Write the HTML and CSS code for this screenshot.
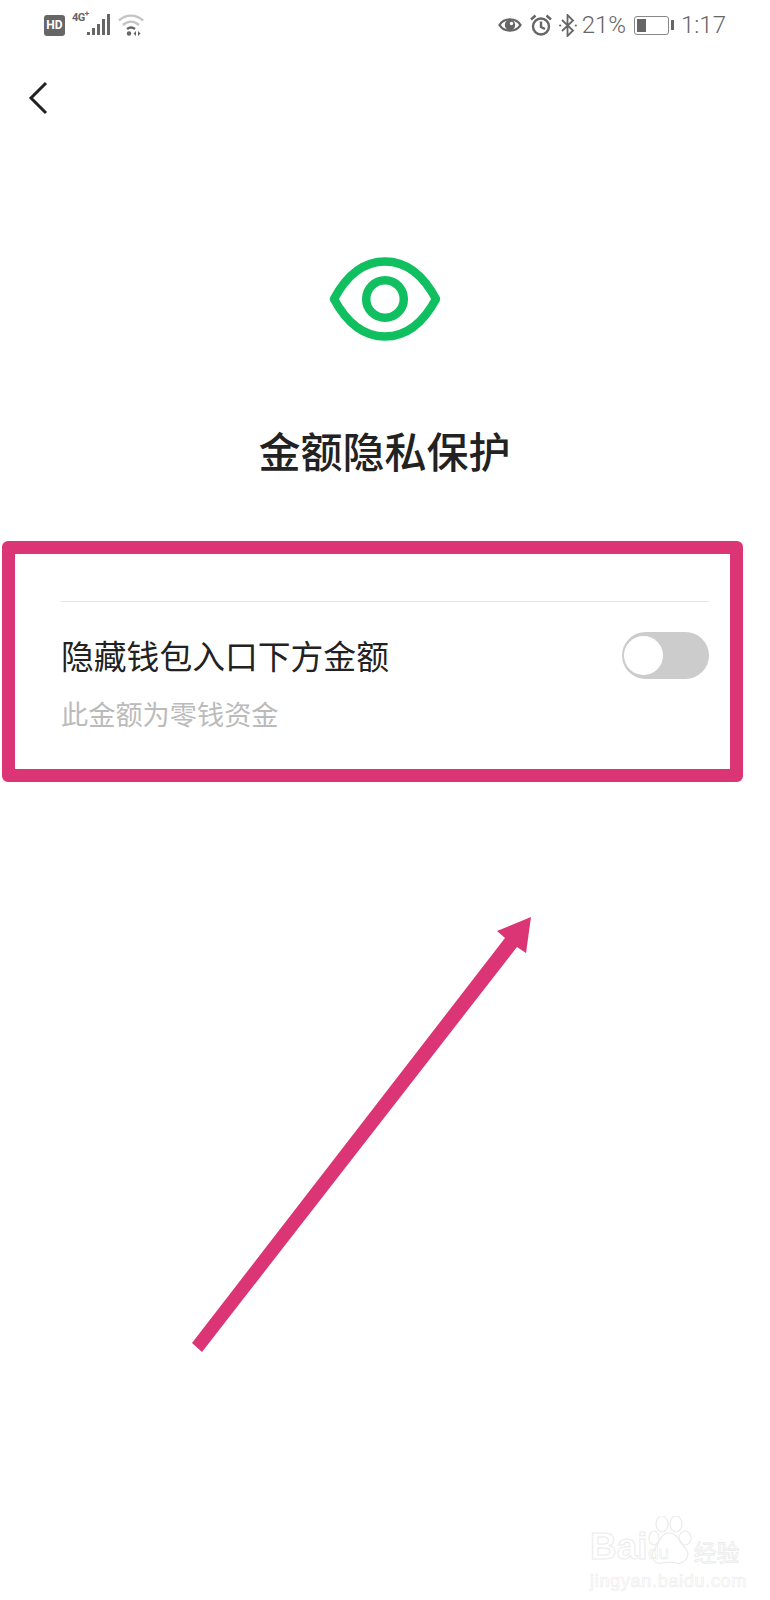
FILE: index.html
```html
<!DOCTYPE html>
<html lang="zh-CN">
<head>
    <meta charset="UTF-8">
    <meta name="viewport" content="width=device-width, initial-scale=1.0">
    <title>金额隐私保护</title>
    <link rel="stylesheet" href="styles.css">
</head>
<body>
    <div class="status-bar">
        <div class="status-left">
            <div class="hd-badge">HD</div>
            <div class="signal">
                <span class="net-type">4G<sup>+</sup></span>
                <svg class="signal-bars" width="24" height="22" viewBox="0 0 24 22" fill="#666">
                    <rect x="0" y="18" width="3" height="3"></rect>
                    <rect x="5" y="14" width="3" height="7"></rect>
                    <rect x="10" y="10" width="3" height="11"></rect>
                    <rect x="15" y="5" width="3" height="16"></rect>
                    <rect x="20" y="0" width="3" height="21"></rect>
                </svg>
            </div>
            <svg class="wifi" width="26" height="24" viewBox="0 0 26 24" fill="none" stroke-width="2.4">
                <path d="M1 7.5C8 1 18 1 25 7.5" stroke="#c4c4c4"></path>
                <path d="M5 12C10 7.5 16 7.5 21 12" stroke="#c4c4c4"></path>
                <path d="M9 16C11.5 14 14.5 14 17 16" stroke="#666"></path>
                <circle cx="11" cy="20.5" r="2.2" fill="#666" stroke="none"></circle>
                <path d="M18 18L15.5 20.5L18 23ZM20 18L22.5 20.5L20 23Z" fill="#666" stroke="none"></path>
            </svg>
        </div>
        <div class="status-right">
            <svg width="24" height="18" viewBox="0 0 24 18" fill="none" stroke="#666" stroke-width="2.4">
                <path d="M1.5 9C6 1.5 18 1.5 22.5 9C18 16.5 6 16.5 1.5 9Z"></path>
                <circle cx="12" cy="9" r="5.2" fill="#666" stroke="none"></circle>
                <circle cx="13.5" cy="7.5" r="1.7" fill="#fff" stroke="none"></circle>
            </svg>
            <svg class="alarm" width="22" height="22" viewBox="0 0 22 22" fill="none" stroke="#666" stroke-width="2.4">
                <circle cx="11" cy="12.5" r="8"></circle>
                <path d="M11 7.5V13L15 15"></path>
                <path d="M1 5.5L5.5 1.5M21 5.5L16.5 1.5"></path>
            </svg>
            <svg class="bluetooth" width="18" height="23" viewBox="0 0 18 23" fill="none" stroke="#666" stroke-width="1.8">
                <path d="M3 6L14 16.5L8.5 22V1L14 6.5L3 17"></path>
                <circle cx="1.2" cy="11.5" r="1.1" fill="#666" stroke="none"></circle>
                <circle cx="16.8" cy="11.5" r="1.1" fill="#666" stroke="none"></circle>
            </svg>
            <span class="battery-text">21%</span>
            <div class="battery">
                <div class="battery-body"><div class="battery-level"></div></div>
                <div class="battery-tip"></div>
            </div>
            <span class="clock">1:17</span>
        </div>
    </div>

    <div class="nav">
        <svg width="20" height="34" viewBox="0 0 20 34" fill="none" stroke="#222" stroke-width="3">
            <path d="M18 2L3 17L18 32"></path>
        </svg>
    </div>

    <div class="hero">
        <svg width="112" height="84" viewBox="0 0 112 84" fill="none" stroke="#10c060" stroke-width="8.5">
            <path d="M5 42C20 14 38 4.5 56 4.5C74 4.5 92 14 107 42C92 70 74 79.5 56 79.5C38 79.5 20 70 5 42Z" stroke-linejoin="round"></path>
            <circle cx="56" cy="42" r="18.8"></circle>
        </svg>
        <h1 class="hero-title">金额隐私保护</h1>
    </div>

    <div class="setting-box">
        <div class="setting-line"></div>
        <div class="setting-row">
            <span class="setting-label">隐藏钱包入口下方金额</span>
            <div class="switch"><div class="switch-knob"></div></div>
        </div>
        <div class="setting-desc">此金额为零钱资金</div>
    </div>

    <!-- 标注箭头 -->
    <svg class="arrow" width="770" height="1600" viewBox="0 0 770 1600">
        <polygon points="192,1343 505,938 497,931 531,917 526,953 517,947 202,1352" fill="#dc3576"></polygon>
    </svg>

    <!-- 水印 -->
    <div class="watermark">
        <div class="wm-logo">
            <span class="wm-word">Bai</span>
            <svg class="wm-paw" width="44" height="52" viewBox="0 0 44 52" fill="none" stroke="#ebebeb" stroke-width="1.2">
                <ellipse cx="14" cy="8" rx="6" ry="8"></ellipse>
                <ellipse cx="28" cy="8" rx="6" ry="8"></ellipse>
                <ellipse cx="6" cy="22" rx="5" ry="7"></ellipse>
                <ellipse cx="37" cy="22" rx="6" ry="7"></ellipse>
                <path d="M21 17C30 17 33 28 38 33C43 40 36 49 28 47C24 46 18 46 14 47C6 49 2 40 6 34C11 29 12 17 21 17Z"></path>
            </svg>
            <span class="wm-du">du</span>
            <span class="wm-cn">经验</span>
        </div>
        <div class="wm-url">jingyan.baidu.com</div>
    </div>
</body>
</html>
```

FILE: styles.css
```css
body {
    position: relative;
    margin: 0;
    height: 1600px;
    overflow: hidden;
    background-color: #ffffff;
    font-family: "Noto Sans CJK SC", "Liberation Sans", sans-serif;
}

/* 状态栏 */
.status-bar {
    height: 50px;
    padding: 0 44px;
    display: flex;
    align-items: center;
    justify-content: space-between;
    color: #666;
    font-family: Roboto, "Liberation Sans", sans-serif;
}

.status-left,
.status-right {
    display: flex;
    align-items: center;
}

.hd-badge {
    width: 21px;
    height: 21px;
    border-radius: 3px;
    background-color: #666;
    display: flex;
    align-items: center;
    justify-content: center;
    color: white;
    font-size: 12px;
    font-weight: 700;
}

.signal {
    position: relative;
    width: 39px;
    height: 22px;
    margin-left: 7px;
    display: flex;
    justify-content: flex-end;
}

.net-type {
    position: absolute;
    left: 0;
    top: -3px;
    font-size: 11px;
    font-weight: 700;
    line-height: 14px;
    letter-spacing: -0.5px;
}

.net-type sup {
    font-size: 8px;
    line-height: 0;
}

.wifi {
    margin-left: 7px;
}

.status-right svg {
    flex: none;
}

.alarm {
    margin-left: 8px;
}

.bluetooth {
    margin-left: 7px;
}

.battery-text {
    margin-left: 5px;
    font-size: 24px;
    font-weight: 300;
}

.battery {
    margin-left: 8px;
    display: flex;
    align-items: center;
    gap: 2px;
}

.battery-body {
    width: 35px;
    height: 19px;
    box-sizing: border-box;
    padding: 2px;
    border: 1px solid #888;
    border-radius: 3px;
}

.battery-level {
    width: 9px;
    height: 100%;
    background-color: #666;
}

.battery-tip {
    width: 3px;
    height: 10px;
    background-color: #666;
}

.clock {
    margin-left: 7px;
    font-size: 24px;
    font-weight: 300;
}

/* 顶部返回 */
.nav {
    height: 66px;
    padding: 31px 0 0 28px;
}

.nav svg {
    display: block;
}

/* 图标和标题 */
.hero {
    margin-top: 110px;
    padding-right: 1px;
    display: flex;
    flex-direction: column;
    align-items: center;
}

.hero svg {
    display: block;
}

.hero-title {
    margin: 79px 0 0;
    font-size: 42px;
    font-weight: 500;
    line-height: 60px;
    color: #222;
}

/* 粉色框住的设置项 */
.setting-box {
    width: 741px;
    height: 241px;
    margin: 61px 0 0 2px;
    padding: 47px 21px 0 46px;
    box-sizing: border-box;
    border: 13px solid #dc3576;
    border-radius: 6px;
}

.setting-line {
    height: 1px;
    margin-bottom: 30px;
    background-color: #e5e5e5;
}

.setting-row {
    display: flex;
    align-items: center;
    justify-content: space-between;
    height: 47px;
}

.setting-label {
    margin-bottom: 2px;
    font-size: 32.8px;
    color: #222;
}

.switch {
    width: 87px;
    height: 47px;
    padding: 4px 2px;
    box-sizing: border-box;
    border-radius: 24px;
    background-color: #cccccc;
}

.switch-knob {
    width: 39px;
    height: 39px;
    border-radius: 50%;
    background-color: white;
}

.setting-desc {
    margin-top: 14px;
    font-size: 27.2px;
    line-height: 40px;
    color: #bbbbbb;
}

/* 标注箭头 */
.arrow {
    position: absolute;
    left: 0;
    top: 0;
    pointer-events: none;
}

/* 水印 */
.watermark {
    position: absolute;
    left: 590px;
    top: 1516px;
    color: #ffffff;
    font-family: "Liberation Sans", sans-serif;
}

.wm-logo {
    position: relative;
    display: flex;
    align-items: flex-end;
    height: 52px;
}

.wm-word {
    font-size: 37px;
    font-weight: 700;
    line-height: 42px;
    -webkit-text-stroke: 1px #ebebeb;
}

.wm-du {
    position: absolute;
    left: 58px;
    top: 26px;
    font-size: 19px;
    line-height: 22px;
    -webkit-text-stroke: 0.6px #ebebeb;
}

.wm-cn {
    margin-left: 2px;
    font-family: "Noto Sans CJK SC", sans-serif;
    font-size: 23px;
    line-height: 34px;
    -webkit-text-stroke: 0.8px #ebebeb;
}

.wm-url {
    margin-top: 2px;
    font-size: 18px;
    line-height: 22px;
    letter-spacing: 0.7px;
    -webkit-text-stroke: 0.7px #eeeeee;
}
```
